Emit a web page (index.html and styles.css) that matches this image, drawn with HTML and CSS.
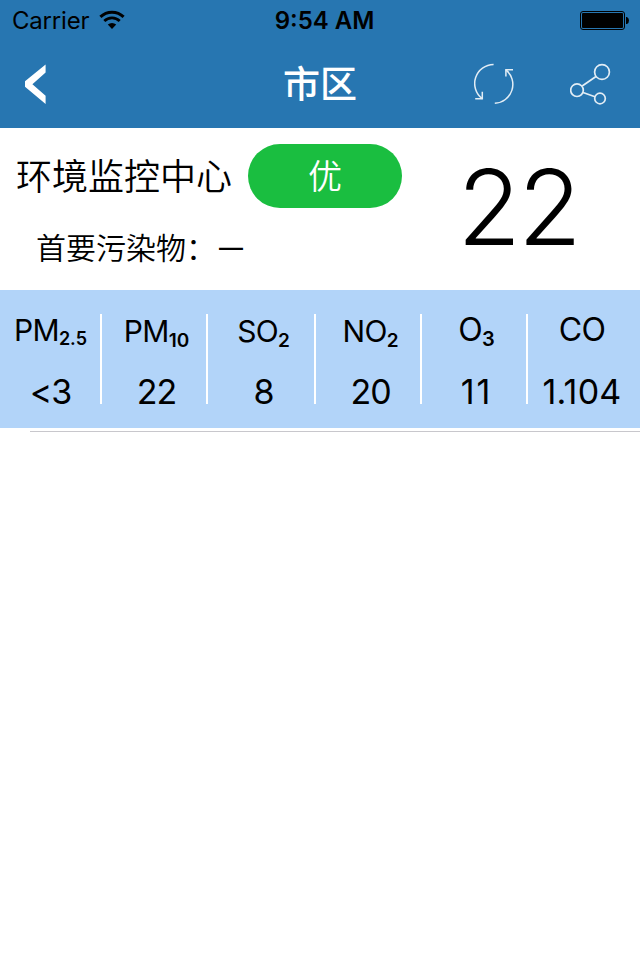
FILE: index.html
```
<!DOCTYPE html>
<html lang="zh-CN">
<head>
    <meta charset="UTF-8">
    <meta name="viewport" content="width=device-width, initial-scale=1.0">
    <title>市区</title>
    <link rel="stylesheet" href="styles.css">
</head>
<body>

    <header class="header">
        <div class="status-bar">
            <div class="status-left">
                <span class="carrier">Carrier</span>
                <svg class="wifi" width="26" height="20" viewBox="0 0 26 20">
                    <path d="M1.4 6.9 A16.6 16.6 0 0 1 24.6 6.9" fill="none" stroke="#000" stroke-width="3"/>
                    <path d="M5.3 11 A11 11 0 0 1 20.7 11" fill="none" stroke="#000" stroke-width="2.8"/>
                    <path d="M13 19 L8.8 14.6 A6 6 0 0 1 17.2 14.6 Z" fill="#000"/>
                </svg>
            </div>
            <span class="time">9:54 AM</span>
            <svg class="battery" width="50" height="20" viewBox="0 0 50 20">
                <rect x="0.5" y="1.5" width="44" height="18" rx="2.5" fill="none" stroke="#000"/>
                <rect x="2" y="3" width="41" height="15" rx="1" fill="#000"/>
                <path d="M46 7 h1 q2 1 2 3.5 t-2 3.5 h-1 z" fill="#000"/>
            </svg>
        </div>
        <div class="nav-bar">
            <svg class="back" width="22" height="40" viewBox="0 0 22 40">
                <path d="M20.6 0.4 V8.5 L7.4 20.3 L20.6 31.8 V40 L0 22.8 V17.3 Z" fill="#fff"/>
            </svg>
            <h1 class="title">市区</h1>
            <div class="nav-actions">
                <svg width="42" height="42" viewBox="0 0 42 42" fill="none" stroke="#e2edf5" stroke-width="1.5">
                    <path d="M19.6 1.5 A19 19 0 0 0 8.3 35.7"/>
                    <path d="M1.2 35.7 H8.3 V28.7"/>
                    <path d="M20.8 40.3 A18.9 18.9 0 0 0 31.9 6.8"/>
                    <path d="M39 6.8 H31.9 V13.5"/>
                </svg>
                <svg width="42" height="42" viewBox="0 0 42 42" fill="none" stroke="#e2edf5" stroke-width="1.7">
                    <circle cx="32" cy="9" r="7.4"/>
                    <circle cx="7" cy="27.2" r="6.3"/>
                    <circle cx="30" cy="35.5" r="5.3"/>
                    <path d="M12.2 23 L26 13.5 M13 29.5 L25 33.8"/>
                </svg>
            </div>
        </div>
    </header>

    <section class="station">
        <div class="station-info">
            <div class="station-top">
                <span class="station-name">环境监控中心</span>
                <span class="level">优</span>
            </div>
            <div class="pollutant"><span>首要污染物：</span><span class="dash">—</span></div>
        </div>
        <div class="aqi">22</div>
    </section>

    <section class="readings">
        <div class="reading pm25">
            <div class="label">PM<sub>2.5</sub></div>
            <div class="value">&lt;3</div>
        </div>
        <div class="reading pm10">
            <div class="label">PM<sub>10</sub></div>
            <div class="value">22</div>
        </div>
        <div class="reading so2">
            <div class="label">SO<sub>2</sub></div>
            <div class="value">8</div>
        </div>
        <div class="reading no2">
            <div class="label">NO<sub>2</sub></div>
            <div class="value">20</div>
        </div>
        <div class="reading o3">
            <div class="label">O<sub>3</sub></div>
            <div class="value">11</div>
        </div>
        <div class="reading co">
            <div class="label">CO</div>
            <div class="value">1.104</div>
        </div>
    </section>
    <hr class="separator">

</body>
</html>
```
FILE: styles.css
```
* {
    box-sizing: border-box;
}

body {
    margin: 0;
    width: 640px;
    height: 960px;
    background: #fff;
    color: #000;
    font-family: Inter, 'Noto Sans CJK SC', sans-serif;
}

/* Header */
.header {
    height: 128px;
    background: #2776b1;
}

.status-bar {
    display: grid;
    grid-template-columns: 1fr auto 1fr;
    align-items: center;
    height: 40px;
    padding: 0 10px 0 12px;
    line-height: 40px;
}

.status-left {
    display: flex;
    align-items: center;
}

.carrier {
    padding-top: 2px;
    font-size: 24px;
    letter-spacing: -0.2px;
    line-height: 38px;
}

.wifi {
    margin-left: 10px;
}

.time {
    padding: 2px 0 0 7px;
    font-size: 24px;
    font-weight: 600;
    line-height: 38px;
}

.battery {
    justify-self: end;
}

.nav-bar {
    display: grid;
    grid-template-columns: 1fr auto 1fr;
    align-items: center;
    height: 88px;
    padding: 0 28px 0 25px;
}

.title {
    margin: 0;
    padding: 2px 0 0 3px;
    color: #fff;
    font-size: 37px;
    font-weight: 500;
    line-height: 86px;
}

.nav-actions {
    display: flex;
    justify-content: flex-end;
    gap: 54px;
}

/* Station */
.station {
    display: flex;
    height: 162px;
}

.station-info {
    width: 402px;
    padding: 16px 0 0 16px;
}

.station-top {
    display: flex;
    justify-content: space-between;
    align-items: center;
}

.station-name {
    padding-top: 2px;
    font-size: 36px;
    font-weight: 350;
    line-height: 62px;
}

.level {
    width: 154px;
    height: 64px;
    padding-top: 1px;
    border-radius: 32px;
    background: #1abe40;
    color: #fff;
    font-size: 34px;
    font-weight: 350;
    line-height: 63px;
    text-align: center;
}

.pollutant {
    display: flex;
    padding: 20px 0 0 20px;
    font-size: 30px;
    font-weight: 350;
    line-height: 40px;
}

.dash {
    padding: 0 0 0 3px;
    font-size: 24px;
    font-weight: 500;
}

.aqi {
    flex: 1;
    padding: 17px 6px 0 0;
    font-size: 104px;
    font-weight: 275;
    line-height: 125px;
    letter-spacing: -3px;
    text-align: center;
}

/* Readings */
.readings {
    display: grid;
    grid-template-columns: 102px 106px 108px 106px 106px 112px;
    height: 138px;
    padding: 24px 0;
    background: #b2d4f9;
}

.reading {
    height: 90px;
    padding-left: 5px;
    border-right: 2px solid #fff;
    text-align: center;
    white-space: nowrap;
}

.reading:first-child {
    padding-left: 1px;
}

.reading:last-child {
    padding: 0 4px 0 0;
    border-right: none;
}

.label {
    height: 56px;
    font-size: 30px;
    letter-spacing: -0.7px;
    line-height: 34px;
}

.label sub {
    position: relative;
    top: 5px;
    font-size: 19px;
    font-weight: 600;
    letter-spacing: 0;
    line-height: 0;
    vertical-align: baseline;
}

.value {
    padding-top: 1px;
    font-size: 34px;
    letter-spacing: -1px;
    line-height: 42px;
}

.o3 .label,
.co .label {
    font-size: 32px;
    line-height: 32px;
}

.o3 .label sub {
    font-size: 20px;
}

.o3 .value {
    letter-spacing: 2px;
}

.co .value {
    letter-spacing: 0.2px;
}

.pm25 .label {
    line-height: 33px;
}

.pm25 .label sub {
    top: 4px;
    font-size: 18px;
}

.separator {
    height: 1px;
    margin: 3px 0 0 30px;
    border: none;
    background: #c8c7cc;
}
```
